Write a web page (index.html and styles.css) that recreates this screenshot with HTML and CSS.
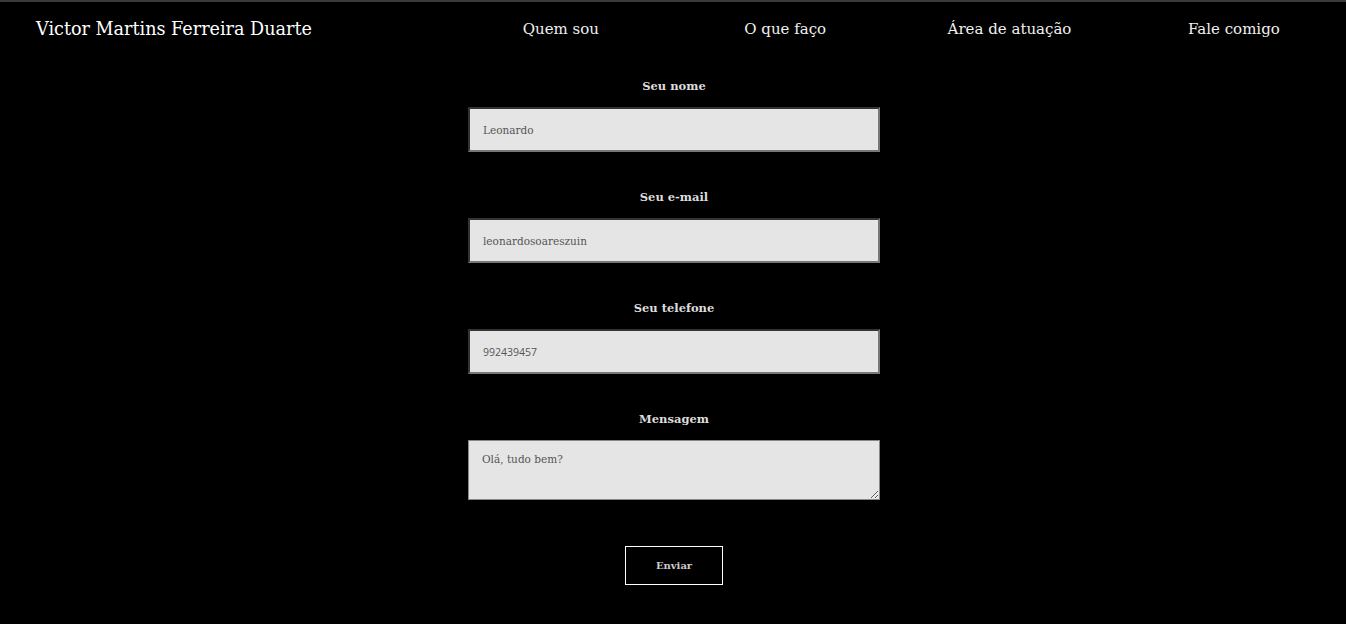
FILE: index.html
```html
<!DOCTYPE html>
<html lang="pt-BR">
<head>
<meta charset="utf-8">
<title>Victor Martins Ferreira Duarte</title>
<link rel="stylesheet" href="styles.css">
</head>
<body>
<header class="topbar">
  <div class="brand">Victor Martins Ferreira Duarte</div>
  <nav class="menu">
    <a class="menu-item" href="#">Quem sou</a>
    <a class="menu-item" href="#">O que faço</a>
    <a class="menu-item" href="#">Área de atuação</a>
    <a class="menu-item" href="#">Fale comigo</a>
  </nav>
</header>
<form class="contact">
  <div class="group">
    <label class="label" for="nome">Seu nome</label>
    <input class="field" id="nome" type="text" value="Leonardo">
  </div>
  <div class="group">
    <label class="label" for="email">Seu e-mail</label>
    <input class="field" id="email" type="text" value="leonardosoareszuin">
  </div>
  <div class="group">
    <label class="label" for="tel">Seu telefone</label>
    <input class="field field-tel" id="tel" type="text" value="992439457">
  </div>
  <div class="group">
    <label class="label" for="msg">Mensagem</label>
    <textarea class="area" id="msg">Olá, tudo bem?</textarea>
  </div>
  <button class="send" type="button">Enviar</button>
</form>
</body>
</html>
```
FILE: styles.css
```css
* { box-sizing: border-box; }
html, body { margin: 0; padding: 0; }
body {
  background: #000;
  border-top: 2px solid #3a3a3a;
  font-family: "DejaVu Serif", "Liberation Serif", serif;
  color: #eee;
  height: 624px;
  overflow: hidden;
}
.topbar {
  display: grid;
  grid-template-columns: 1fr 2fr;
  align-items: center;
  height: 54px;
}
.brand {
  padding-left: 36px;
  font-size: 17.6px;
  color: #fff;
}
.menu {
  display: flex;
}
.menu-item {
  flex: 1;
  text-align: center;
  font-size: 15px;
  color: #f0f0f0;
  text-decoration: none;
}
.contact {
  width: 412px;
  margin: 20px 0 0 calc(50% - 205px);
  display: flex;
  flex-direction: column;
  align-items: center;
}
.group {
  width: 100%;
  display: flex;
  flex-direction: column;
  margin-bottom: 35px;
}
.label {
  text-align: center;
  font-size: 11.5px;
  font-weight: bold;
  line-height: 20px;
  color: #ddd;
  margin-bottom: 11px;
}
.field {
  height: 45px;
  width: 100%;
  background: #e5e5e5;
  border: 2px solid #777;
  border-top-color: #333;
  border-left-color: #333;
  padding: 0 13px;
  font-family: "DejaVu Serif", serif;
  font-size: 10.5px;
  color: #555;
}
.field-tel {
  font-family: "Open Sans", sans-serif;
}
.area {
  height: 60px;
  width: 100%;
  background: #e5e5e5;
  border: 1px solid #888;
  padding: 12px 13px;
  font-family: "DejaVu Serif", serif;
  font-size: 10.5px;
  color: #555;
  resize: vertical;
}
.group:last-of-type { margin-bottom: 46px; }
.send {
  width: 98px;
  height: 39px;
  background: #000;
  border: 1px solid #fff;
  color: #ccc;
  font-family: "DejaVu Serif", serif;
  font-size: 10px;
  font-weight: bold;
}
```
